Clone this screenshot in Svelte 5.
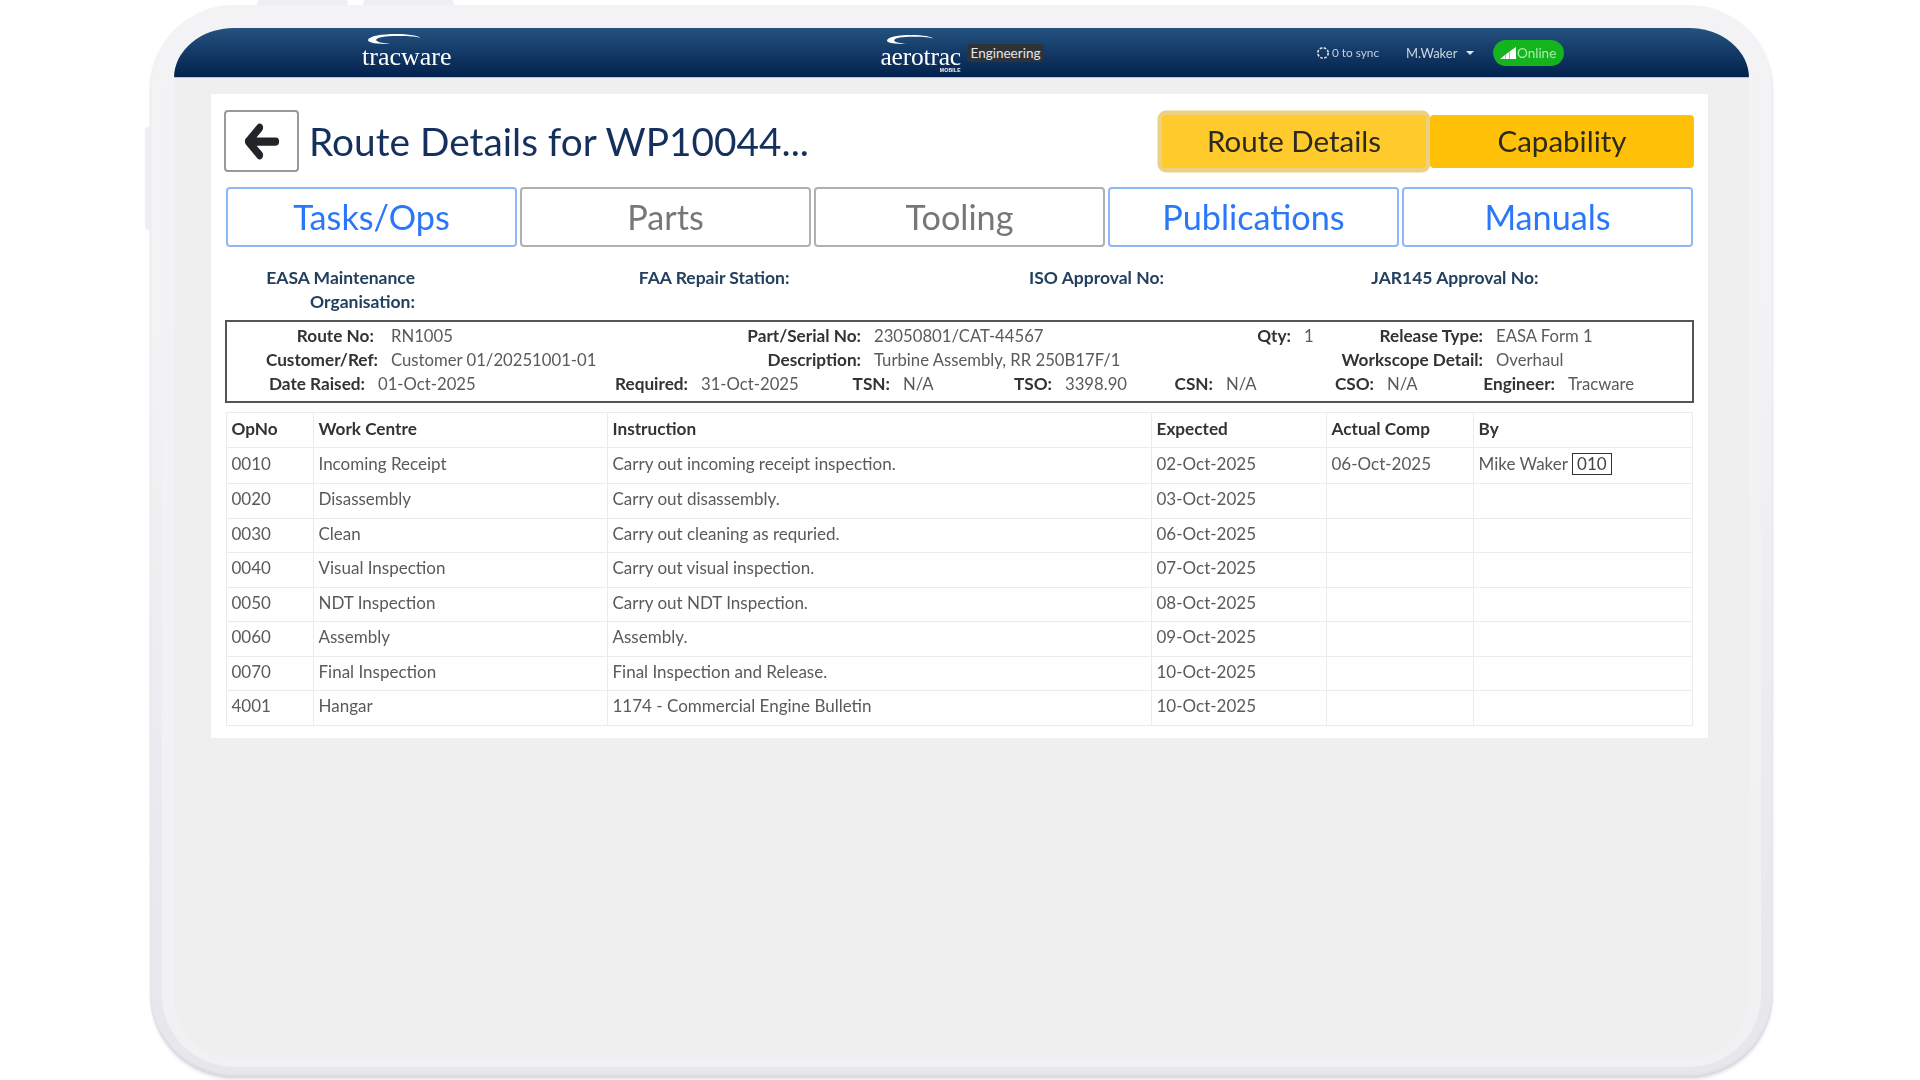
<script>
  const tabs = [
    { label: 'Tasks/Ops', on: true },
    { label: 'Parts', on: false },
    { label: 'Tooling', on: false },
    { label: 'Publications', on: true },
    { label: 'Manuals', on: true }
  ];
  const approvals = ['EASA Maintenance Organisation:', 'FAA Repair Station:', 'ISO Approval No:', 'JAR145 Approval No:'];
  const rowA = [
    ['Route No:\u00a0', 'RN1005'], ['Part/Serial No:', '23050801/CAT-44567'], ['Qty:', '1'], ['Release Type:', 'EASA Form 1'],
    ['Customer/Ref:', 'Customer 01/20251001-01'], ['Description:', 'Turbine Assembly, RR 250B17F/1'], ['', ''], ['Workscope Detail:', 'Overhaul']
  ];
  const rowB = [
    ['Date Raised:', '01-Oct-2025'], ['Required:', '31-Oct-2025'], ['TSN:', 'N/A'], ['TSO:', '3398.90'],
    ['CSN:', 'N/A'], ['CSO:', 'N/A'], ['Engineer:', 'Tracware']
  ];
  const ops = [
    ['0010', 'Incoming Receipt', 'Carry out incoming receipt inspection.', '02-Oct-2025', '06-Oct-2025', 'Mike Waker', '010'],
    ['0020', 'Disassembly', 'Carry out disassembly.', '03-Oct-2025', '', '', ''],
    ['0030', 'Clean', 'Carry out cleaning as requried.', '06-Oct-2025', '', '', ''],
    ['0040', 'Visual Inspection', 'Carry out visual inspection.', '07-Oct-2025', '', '', ''],
    ['0050', 'NDT Inspection', 'Carry out NDT Inspection.', '08-Oct-2025', '', '', ''],
    ['0060', 'Assembly', 'Assembly.', '09-Oct-2025', '', '', ''],
    ['0070', 'Final Inspection', 'Final Inspection and Release.', '10-Oct-2025', '', '', ''],
    ['4001', 'Hangar', '1174 - Commercial Engine Bulletin', '10-Oct-2025', '', '', '']
  ];
</script>

<div class="stage">
  <div class="device">
    <span class="key key-a"></span>
    <span class="key key-b"></span>
    <span class="key key-side"></span>
    <div class="bezel">
      <div class="screen">
        <header class="nav">
          <div class="logo tracware">
            <svg class="swoosh" viewBox="0 0 52 10" aria-hidden="true"><path d="M0 6C1 2 14 0 28 0 40 0 52 2 52 4 48 2 36 2 28 2 18 2 9 3 8 6 9 8 14 9 22 10 9 10 0 9 0 6Z" fill="#fff"/></svg>
            <span>tracware</span>
          </div>
          <div class="logo aerotrac">
            <svg class="swoosh" viewBox="0 0 52 10" aria-hidden="true"><path d="M0 6C1 2 14 0 28 0 40 0 52 2 52 4 48 2 36 2 28 2 18 2 9 3 8 6 9 8 14 9 22 10 9 10 0 9 0 6Z" fill="#fff"/></svg>
            <span>aerotrac</span>
            <small>MOBILE</small>
          </div>
          <span class="badge">Engineering</span>
          <svg class="sync" viewBox="0 0 14 14" aria-hidden="true"><circle cx="7" cy="7" r="5.200" fill="none" stroke="#dbe3ec" stroke-width="1.600" stroke-dasharray="2.600 1.500"/></svg>
          <span class="sync-text">0 to sync</span>
          <span class="user">M.Waker</span>
          <span class="caret"></span>
          <span class="online">
            <svg viewBox="0 0 16 12" aria-hidden="true"><path d="M0 12 5 8V12ZM5.500 7.600 9 5V12H5.500ZM9.500 4.600 16 0V12H9.500Z" fill="#fff"/></svg>
            Online
          </span>
        </header>

        <main class="card">
          <div class="head">
            <button class="back" aria-label="Back">
              <svg viewBox="0 64 448 384" preserveAspectRatio="none" aria-hidden="true"><path d="M9.400 233.400c-12.500 12.500-12.500 32.800 0 45.300l160 160c12.500 12.500 32.800 12.500 45.300 0s12.500-32.800 0-45.300L109.200 288 416 288c17.700 0 32-14.300 32-32s-14.300-32-32-32l-306.700 0L214.600 118.600c12.500-12.500 12.500-32.800 0-45.300s-32.800-12.500-45.300 0l-160 160z" fill="#212529" stroke="#212529" stroke-width="32"/></svg>
            </button>
            <h1>Route Details for WP10044...</h1>
            <button class="amber active">Route Details</button>
            <button class="amber">Capability</button>
          </div>

          <nav class="tabs">
            {#each tabs as t}
              <button class="tab" class:on={t.on}>{t.label}</button>
            {/each}
          </nav>

          <div class="approvals">
            {#each approvals as a}
              <div>{a}</div>
            {/each}
          </div>

          <section class="summary">
            <div class="grid-a">
              {#each rowA as [k, v]}
                <b>{k}</b><span>{v}</span>
              {/each}
            </div>
            <div class="grid-b">
              {#each rowB as [k, v]}
                <b>{k}</b><span>{v}</span>
              {/each}
            </div>
          </section>

          <table>
            <colgroup>
              <col style="width:87px" /><col style="width:294px" /><col style="width:544px" /><col style="width:175px" /><col style="width:147px" /><col />
            </colgroup>
            <thead>
              <tr><th>OpNo</th><th>Work Centre</th><th>Instruction</th><th>Expected</th><th>Actual Comp</th><th>By</th></tr>
            </thead>
            <tbody>
              {#each ops as o, i}
                <tr class:first={i === 0}>
                  <td>{o[0]}</td><td>{o[1]}</td><td>{o[2]}</td><td>{o[3]}</td><td>{o[4]}</td>
                  <td class="by">{o[5]}{#if o[6]}<span class="stamp">{o[6]}</span>{/if}</td>
                </tr>
              {/each}
            </tbody>
          </table>
        </main>
      </div>
    </div>
  </div>
</div>

<style>
  :global(body) { margin: 0; background: #fff; font-family: Lato, "Open Sans", sans-serif; }
  .stage { width: 1920px; height: 1080px; padding: 5px 0 0 150px; box-sizing: border-box; overflow: hidden; }
  .device {
    position: relative; width: 1623px; height: 1073px; box-sizing: border-box;
    padding: 12px 12px 11px; border-radius: 84px; background: linear-gradient(#f3f3f5 30%, #e6e6eb);
    box-shadow: inset 0 -3px 2px #dadae1, 0 2px 3px #e9e9ee;
  }
  .key { position: absolute; background: #efeff3; }
  .key-a { left: 107px; top: -5px; width: 91px; height: 5px; border-radius: 3px 3px 0 0; }
  .key-b { left: 213px; top: -5px; width: 91px; height: 5px; border-radius: 3px 3px 0 0; }
  .key-side { left: -5px; top: 122px; width: 5px; height: 103px; border-radius: 3px 0 0 3px; }
  .bezel { height: 100%; box-sizing: border-box; padding: 11px 12px 8px; border-radius: 72px; background: linear-gradient(#f3f3f6, #f1f1f3); }
  .screen {
    height: 100%; box-sizing: border-box; padding-bottom: 1px; background: #efefef;
    border-radius: 60px 60px 60px 60px / 50px 50px 60px 60px; filter: blur(.45px);
  }
  .nav {
    display: flex; align-items: center; height: 50px; box-sizing: border-box; color: #fff;
    border-radius: 60px 60px 0 0 / 50px 50px 0 0; border-bottom: 1px solid #b9c6d6;
    background: linear-gradient(#25527f, #02214e);
  }
  .logo { position: relative; font-family: "Liberation Serif", serif; line-height: 1; }
  .logo span { display: block; }
  .swoosh { position: absolute; display: block; }
  .tracware { margin-left: 188px; padding: 8px 0 0; font-size: 26px; }
  .tracware .swoosh { left: 6px; top: -2px; width: 52px; height: 10px; }
  .aerotrac { margin-left: 429px; padding: 8px 0 0; font-size: 25.500px; letter-spacing: -.2px; }
  .aerotrac .swoosh { left: 7px; top: -1px; width: 46px; height: 9px; }
  .aerotrac small { position: absolute; right: 0; bottom: -4px; font: 700 5px "Liberation Sans", sans-serif; letter-spacing: .3px; }
  .badge {
    margin-left: 6px; width: 77px; height: 18px; line-height: 18px; text-align: center;
    border-radius: 3px; background: #2f3338; color: #e4e6e8; font-size: 13.500px;
  }
  .sync { margin-left: 272px; width: 14px; height: 14px; }
  .sync-text { margin-left: 2px; width: 74px; color: #c4cfdc; font-size: 11.800px; }
  .user { width: 60px; color: #ccd5e0; font-size: 13px; }
  .caret { width: 0; height: 0; border: 4px solid transparent; border-top-color: #e0e5ea; border-bottom: 0; }
  .online {
    display: flex; align-items: center; gap: 1px; margin-left: 19px; width: 71px; height: 26px; box-sizing: border-box; padding-left: 7px;
    border-radius: 13px; background: #15b31e; color: #a9ecac; font-size: 13.500px;
  }
  .online svg { width: 16px; height: 12px; }

  .card { margin: 16px 41px 0 37px; padding: 16px 14px 12px 13px; background: #fff; }
  .head { display: flex; align-items: center; height: 62px; }
  .back { display: flex; align-items: center; justify-content: center; width: 75px; height: 62px; padding: 0; box-sizing: border-box; border: 2px solid #999; border-radius: 4px; background: #fff; }
  .back svg { width: 32px; height: 33px; overflow: visible; }
  h1 { flex: 1; margin: 0 0 1px 10px; font-size: 38.800px; font-weight: 400; color: #15305c; white-space: nowrap; }
  .amber { width: 264px; height: 53px; padding: 0 0 2px; border: 0; border-radius: 4px; background: #ffc107; color: #2c2a20; font: 400 29.500px Lato, sans-serif; }
  .amber.active { margin-right: 4px; background: #ffca2c; box-shadow: 0 0 0 4.500px rgba(217, 164, 6, .5); }
  .tabs { display: grid; grid-template-columns: repeat(5, 1fr); gap: 3px; margin: 15px 1px 0 2px; }
  .tab { height: 60px; padding: 0 0 2px; box-sizing: border-box; border: 2px solid #b0b0b0; border-radius: 4px; background: #fff; color: #777; font: 400 34.200px Lato, sans-serif; }
  .tab.on { border-color: #8fb8fb; color: #2a78f7; }
  .approvals { display: grid; grid-template-columns: 191px repeat(3, 374.500px); margin-top: 19px; font-size: 17.500px; line-height: 24px; font-weight: 700; color: #24405f; text-align: right; }
  .approvals div:first-child { padding-left: 30px; }
  .summary { margin: 6px 0 0 1px; height: 83px; box-sizing: border-box; padding-top: 2px; border: 2px solid #555; font-size: 16.700px; line-height: 24px; color: #5a5a5a; }
  .summary b { color: #333; font-size: 17.200px; text-align: right; white-space: nowrap; }
  .summary span { padding-left: 13px; white-space: nowrap; }
  .grid-a { display: grid; grid-template-columns: 151px 170px 313px 220px 210px 50px 142px 1fr; }
  .grid-b { display: grid; grid-template-columns: 138px 160px 163px 130px 72px 90px 72px 90px 71px 90px 71px 70px 111px 1fr; }
  table { width: 1467px; margin: 9px 0 0 2px; border-collapse: collapse; table-layout: fixed; font-size: 17px; color: #5a5a5a; }
  th, td { height: 34.500px; padding: 0 0 4px 4.500px; box-sizing: border-box; border: 1px solid #e9ecef; text-align: left; white-space: nowrap; }
  th { height: 35px; font-size: 17.200px; font-weight: 700; color: #333; }
  tr.first td { height: 36px; }
  .stamp { display: inline-block; margin-left: 4px; width: 40px; box-sizing: border-box; text-align: center; line-height: 20px; border: 1px solid #333; color: #444; }
</style>
